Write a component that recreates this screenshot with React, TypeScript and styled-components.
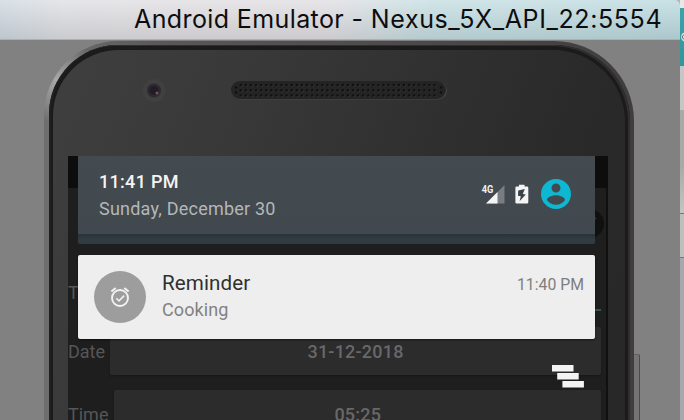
import React from "react";
import styled, { createGlobalStyle } from "styled-components";

const GlobalStyle = createGlobalStyle`
  * { box-sizing: border-box; }
  body { margin: 0; overflow: hidden; background: #b5b5b5; font-family: Roboto, sans-serif; }
`;

const Desktop = styled.div`
  width: 684px;
  height: 420px;
  display: flex;
  overflow: hidden;
`;

const Window = styled.div`
  width: 680px;
  height: 420px;
  display: flex;
  flex-direction: column;
  background: #818181;
  border-top-right-radius: 5px;
  flex-shrink: 0;
`;

const TitleBar = styled.div`
  height: 40px;
  flex-shrink: 0;
  display: flex;
  padding-left: 134px;
  border-top-right-radius: 5px;
  border-bottom: 1px solid #adb0b2;
  background:
    linear-gradient(180deg, rgba(255, 255, 255, 0.2), rgba(0, 0, 0, 0.09)),
    linear-gradient(90deg, #d0dae1 0, #dfe0e4 65px, #e1dfe2 140px, #e1dfe3 330px, #c6dfe3 430px, #bddbe0 680px);
`;

const Title = styled.div<{ $spacing: string }>`
  font: 400 25px/38px Inter, sans-serif;
  letter-spacing: ${(p) => p.$spacing};
  color: #0d0d10;
  white-space: pre;
`;

const Stage = styled.div`
  display: flex;
  align-items: flex-start;
  padding: 1px 0 0 44px;
  height: 380px;
  overflow: hidden;
`;

const Rim = styled.div`
  width: 590px;
  height: 500px;
  flex-shrink: 0;
  padding: 4px 4px 0 5px;
  border-radius: 74px 80px 0 0;
  background:
    radial-gradient(circle at 14px 40px, rgba(185, 185, 185, 0.8), transparent 42px),
    linear-gradient(90deg, #6f6f6f, #595858 20%, #4c4a4b 60%, #403d3e);
`;

const Edge = styled.div`
  height: 100%;
  padding: 5px 5px 0 4px;
  border-radius: 69px 76px 0 0;
  background: #1b1b1b;
  box-shadow: inset -2px 1px 0 #302e2f, inset 2px 0 0 #202020;
`;

const Face = styled.div`
  height: 100%;
  padding-left: 15px;
  border-radius: 66px 72px 0 0;
  background: linear-gradient(112deg, #3f3f40 0, #39393a 25%, #303030 52%, #292929 75%, #272727);
`;

const Forehead = styled.div`
  height: 106px;
  display: flex;
  align-items: flex-start;
  padding: 28px 0 0 74px;
`;

const Camera = styled.svg`
  width: 24px;
  height: 24px;
  flex-shrink: 0;
`;

const Speaker = styled.svg`
  width: 218px;
  height: 20px;
  margin: 2px 0 0 64px;
`;

const Screen = styled.div`
  position: relative;
  width: 540px;
  height: 300px;
  background: #1e1e1e;
  border-right: 2px solid #101010;
`;

const StatusBar = styled.div`
  height: 32px;
  width: 540px;
  background: #0d0d0d;
`;

const AppBar = styled.div`
  height: 76px;
  display: flex;
  justify-content: flex-end;
  padding: 21px 2px 0 0;
`;

const FieldRow = styled.div<{ $gap: string }>`
  display: flex;
  align-items: center;
  height: 48px;
  margin-bottom: 15px;
  padding-right: 5px;
  gap: ${(p) => p.$gap};
  font-size: 18px;
  line-height: 21px;
  color: #565656;
`;

const TitleRow = styled(FieldRow)`
  padding-top: 9px;
`;

const Underline = styled.div`
  align-self: flex-end;
  flex: 1;
  height: 2px;
  margin-bottom: 1px;
  background: #365351;
`;

const FieldButton = styled.div`
  flex: 1;
  height: 48px;
  border-radius: 2px;
  background: #2c2c2c;
  box-shadow: 0 1px 2px #171717;
  color: #686868;
  font-weight: 500;
  letter-spacing: 0.2px;
  line-height: 49px;
  text-align: center;
`;

const Shade = styled.div`
  position: absolute;
  top: 0;
  left: 10px;
  width: 517px;
  display: flex;
  flex-direction: column;
`;

const QuickHeader = styled.div`
  height: 88.4px;
  display: flex;
  justify-content: space-between;
  padding: 16px 24px 0 21px;
  border-radius: 0 0 2px 2px;
  background: linear-gradient(#434a50 0, #41494e 77.5px, #293439 78.5px, #303c42 83px, #303c42 100%);
`;

const Stack = styled.div`
  display: flex;
  flex-direction: column;
`;

const Clock = styled.div`
  font: 500 18px/20px Roboto, sans-serif;
  letter-spacing: 0.3px;
  color: #f4f4f4;
`;

const DateText = styled.div`
  margin-top: 7px;
  font: 400 18px/20px Roboto, sans-serif;
  letter-spacing: 0.22px;
  color: #b4b7b9;
`;

const StatusIcons = styled.div`
  display: flex;
  height: 44px;
  align-items: center;
`;

const Signal = styled.svg`
  width: 24px;
  height: 20px;
  margin-right: 10px;
`;

const Battery = styled.svg`
  width: 14px;
  height: 20px;
  margin-right: 12px;
`;

const Avatar = styled.svg`
  width: 30px;
  height: 30px;
`;

const Notification = styled.div`
  display: flex;
  height: 84px;
  margin-top: 10.6px;
  padding: 16px 11px 0 16px;
  border-radius: 2px;
  background: #eee;
  box-shadow: 0 1px 2px rgba(0, 0, 0, 0.55);
`;

const NoteText = styled(Stack)`
  flex: 1;
  margin-left: 16px;
`;

const NoteTitle = styled.div`
  font: 400 20.6px/24px Roboto, sans-serif;
  letter-spacing: 0.1px;
  color: #303030;
`;

const NoteBody = styled.div`
  margin-top: 4px;
  font: 400 18px/22px Roboto, sans-serif;
  letter-spacing: 0.1px;
  color: #828282;
`;

const NoteTime = styled.div`
  margin-top: 4px;
  font: 400 15.8px/20px Roboto, sans-serif;
  color: #7e7e7e;
`;

const ClearAll = styled.svg`
  width: 32px;
  height: 24px;
  margin: 25px 11px 0 0;
  align-self: flex-end;
`;

const SideButton = styled.div`
  width: 6px;
  height: 100px;
  margin-top: 313px;
  border-right: 1px solid #4b4b4b;
  border-top: 1px solid #606060;
  border-radius: 0 2px 0 0;
  background: #747474;
`;

const Backdrop = styled.div`
  width: 4px;
  display: flex;
  flex-direction: column;
  background: #a9abad;
`;

const Strip = styled.div<{ $height: number; $fill: string; $line?: boolean }>`
  height: ${(p) => p.$height}px;
  background: ${(p) => p.$fill};
  border-bottom: ${(p) => (p.$line ? "1px solid #777" : "0")};
`;

const columns = Array.from({ length: 39 }, (_, i) => 10.8 + i * 5.1);

export default function App() {
  return (
    <Desktop>
      <GlobalStyle />
      <Window>
        <TitleBar>
          <Title $spacing="0.39px">{"Android Emulator - "}</Title>
          <Title $spacing="0.61px">Nexus_5X_API_22:5554</Title>
        </TitleBar>
        <Stage>
          <Rim>
            <Edge>
              <Face>
                <Forehead>
                  <Camera viewBox="0 0 24 24">
                    <circle cx="12" cy="12.5" r="11.5" fill="#404041" />
                    <circle cx="12" cy="12.5" r="7" fill="#30292f" />
                    <circle cx="12" cy="12.5" r="4.5" fill="#211d28" />
                    <circle cx="15" cy="15" r="1.5" fill="#74515c" />
                  </Camera>
                  <Speaker viewBox="0 0 218 20">
                    <rect x="1.5" y="1.5" width="215.5" height="18" rx="9" fill="#484848" />
                    <rect x="1" y="1" width="215" height="18" rx="9" fill="#242424" />
                    {columns.map((x) =>
                      [5, 10.2, 15.4].map((y) => (
                        <g key={`${x}-${y}`}>
                          <circle cx={x + 0.6} cy={y + 0.6} r="1.2" fill="#393939" />
                          <circle cx={x} cy={y} r="1.2" fill="#101010" />
                        </g>
                      ))
                    )}
                    {[7.5, 12.5].map((y) => (
                      <g key={y} fill="#101010">
                        <circle cx="6" cy={y} r="1.2" />
                        <circle cx="211" cy={y} r="1.2" />
                      </g>
                    ))}
                  </Speaker>
                </Forehead>
                <Screen>
                  <StatusBar />
                  <AppBar>
                    <svg width="29" height="29" viewBox="0 0 29 29">
                      <circle cx="14.5" cy="14.5" r="14.5" fill="#101010" />
                      <path d="M18 11l3-2" stroke="#333" strokeWidth="2" />
                    </svg>
                  </AppBar>
                  <TitleRow $gap="5px">
                    Title
                    <Underline />
                  </TitleRow>
                  <FieldRow $gap="5px">
                    Date
                    <FieldButton>31-12-2018</FieldButton>
                  </FieldRow>
                  <FieldRow $gap="6px">
                    Time
                    <FieldButton>05:25</FieldButton>
                  </FieldRow>
                  <Shade>
                    <QuickHeader>
                      <Stack>
                        <Clock>11:41 PM</Clock>
                        <DateText>Sunday, December 30</DateText>
                      </Stack>
                      <StatusIcons>
                        <Signal viewBox="0 0 24 20">
                          <path d="M5 19.5L23.5 1v18.5z" fill="#787d81" />
                          <path d="M5 19.5L16.5 8v11.5z" fill="#f5f5f5" />
                          <text x="0.7" y="9" fontFamily="Roboto" fontWeight="700" fontSize="11" textLength="11.6" lengthAdjust="spacingAndGlyphs" fill="#f0f0f0" stroke="#434a50" strokeWidth="0.6" paintOrder="stroke">4G</text>
                        </Signal>
                        <Battery viewBox="0 0 14 20">
                          <path d="M1.6 2.5H4V.7h5.5v1.8H12q1.3 0 1.3 1.3v14.5q0 1.3-1.3 1.3H1.6q-1.2 0-1.2-1.3V3.8q0-1.3 1.2-1.3z" fill="#f5f5f5" />
                          <path d="M9.8 5L3.2 6.4 3 11.8l2.8.4-1.2 5 6.2-6.8-3-.5z" fill="#3b4348" />
                        </Battery>
                        <Avatar viewBox="2 2 20 20">
                          <path d="M12 2C6.48 2 2 6.48 2 12s4.48 10 10 10 10-4.48 10-10S17.52 2 12 2zm0 3c1.66 0 3 1.34 3 3s-1.34 3-3 3-3-1.34-3-3 1.34-3 3-3zm0 14.2a7.2 7.2 0 0 1-6-3.22c.03-1.99 4-3.08 6-3.08 1.99 0 5.97 1.09 6 3.08a7.2 7.2 0 0 1-6 3.22z" fill="#0eb8d2" />
                        </Avatar>
                      </StatusIcons>
                    </QuickHeader>
                    <Notification>
                      <svg width="52" height="52" viewBox="0 0 52 52">
                        <circle cx="26" cy="26" r="26" fill="#9d9d9d" />
                        <g fill="none" stroke="#f2f2f2">
                          <circle cx="26" cy="27" r="8" strokeWidth="1.9" />
                          <path d="M17.4 20.5l4.3-3.6M34.6 20.5l-4.3-3.6" strokeWidth="2" />
                          <path d="M22.3 27.2l2.7 2.7 5.2-5.3" strokeWidth="1.5" />
                        </g>
                      </svg>
                      <NoteText>
                        <NoteTitle>Reminder</NoteTitle>
                        <NoteBody>Cooking</NoteBody>
                      </NoteText>
                      <NoteTime>11:40 PM</NoteTime>
                    </Notification>
                    <ClearAll viewBox="0 0 32 24">
                      <path d="M0 1h21.5v6.5H0zM5.2 9.1h21.5v6.5H5.2zM10.4 17.1h21.5v6.5H10.4z" fill="#f4f4f4" />
                    </ClearAll>
                  </Shade>
                </Screen>
              </Face>
            </Edge>
          </Rim>
          <SideButton />
        </Stage>
      </Window>
      <Backdrop>
        <Strip $height={8} $fill="#e8e8e8" />
        <Strip $height={58} $fill="linear-gradient(#38a4aa, #32959a)">
          <svg width="4" height="58" viewBox="0 0 4 58">
            <circle cx="6" cy="29" r="5" fill="#ddd" />
            <path d="M4 26.5l-2 2.5 2 2.5" fill="none" stroke="#666" />
          </svg>
        </Strip>
        <Strip $height={44} $fill="#c6c6c6" />
        <Strip $height={58} $fill="#a9a9a9" />
        <Strip $height={46} $fill="linear-gradient(#aaa, #c5c5c5)" $line />
        <Strip $height={44} $fill="#bebebe" $line />
        <Strip $height={162} $fill="#a6a8ad" />
      </Backdrop>
    </Desktop>
  );
}
